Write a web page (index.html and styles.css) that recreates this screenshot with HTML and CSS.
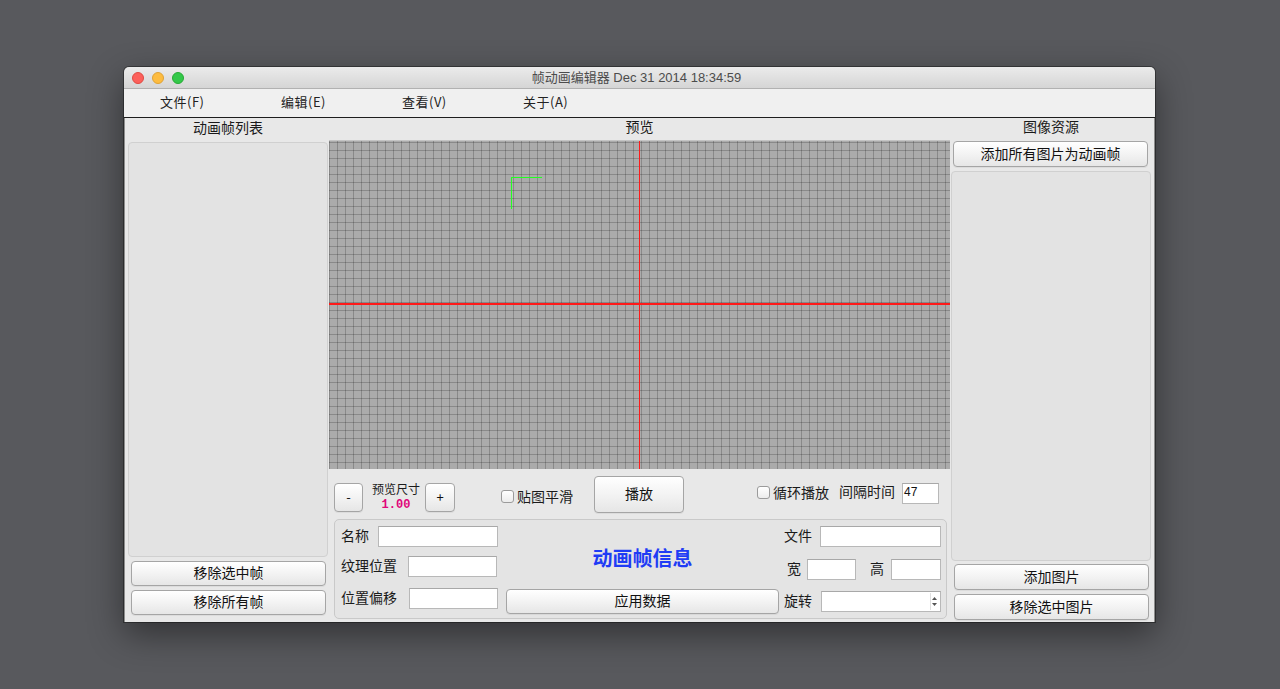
FILE: index.html
```html
<!DOCTYPE html>
<html lang="zh-CN">
<head>
<meta charset="utf-8">
<title>帧动画编辑器</title>
<link rel="stylesheet" href="styles.css">
</head>
<body>
<div class="window">
  <div class="titlebar">
    <div class="lights">
      <span class="light light-red"></span>
      <span class="light light-yellow"></span>
      <span class="light light-green"></span>
    </div>
    <div class="title">帧动画编辑器 Dec 31 2014 18:34:59</div>
    <div></div>
  </div>
  <div class="menubar">
    <span class="menu-item">文件(F)</span>
    <span class="menu-item">编辑(E)</span>
    <span class="menu-item">查看(V)</span>
    <span class="menu-item">关于(A)</span>
  </div>
  <div class="content">
    <section class="side side-left">
      <div class="panel-title title-left">动画帧列表</div>
      <div class="listbox"></div>
      <button class="btn btn-side btn-left-1">移除选中帧</button>
      <button class="btn btn-side btn-left-2">移除所有帧</button>
    </section>

    <section class="center">
      <div class="panel-title title-center">预览</div>
      <div class="preview">
        <div class="axis axis-v"></div>
        <div class="axis axis-h"></div>
        <div class="marker"></div>
      </div>
      <div class="controls">
        <button class="btn btn-zoom btn-minus">-</button>
        <div class="size-block">
          <div class="size-label">预览尺寸</div>
          <div class="size-value">1.00</div>
        </div>
        <button class="btn btn-zoom btn-plus">+</button>
        <label class="check check-smooth"><span class="box"></span><span>贴图平滑</span></label>
        <button class="btn btn-play">播放</button>
        <label class="check check-loop"><span class="box"></span><span>循环播放</span></label>
        <span class="interval-label">间隔时间</span>
        <div class="field field-interval">47</div>
      </div>
      <div class="infobox">
        <div class="info-col info-left">
          <div class="row">
            <span class="lbl lbl-name">名称</span>
            <div class="field w-120"></div>
          </div>
          <div class="row row-gap9">
            <span class="lbl lbl-tex">纹理位置</span>
            <div class="field w-89"></div>
          </div>
          <div class="row row-gap11">
            <span class="lbl lbl-off">位置偏移</span>
            <div class="field w-89"></div>
          </div>
        </div>
        <div class="info-col info-mid">
          <div class="info-title">动画帧信息</div>
          <button class="btn btn-apply">应用数据</button>
        </div>
        <div class="info-col info-right">
          <div class="row">
            <span class="lbl lbl-file">文件</span>
            <div class="field w-121"></div>
          </div>
          <div class="row row-gap12">
            <span class="lbl lbl-w">宽</span>
            <div class="field w-49"></div>
            <span class="lbl lbl-h">高</span>
            <div class="field w-50"></div>
          </div>
          <div class="row row-gap11">
            <span class="lbl lbl-rot">旋转</span>
            <div class="field spin">
              <span class="spin-arrows">
                <svg width="7" height="15" viewBox="0 0 7 15"><path d="M3.5 3 L6 6 L1 6 Z" fill="#555"/><path d="M3.5 12 L6 9 L1 9 Z" fill="#555"/></svg>
              </span>
            </div>
          </div>
        </div>
      </div>
    </section>

    <section class="side side-right">
      <div class="panel-title title-right">图像资源</div>
      <button class="btn btn-side btn-right-top">添加所有图片为动画帧</button>
      <div class="listbox listbox-right"></div>
      <button class="btn btn-side btn-right-1">添加图片</button>
      <button class="btn btn-side btn-right-2">移除选中图片</button>
    </section>
  </div>
</div>
</body>
</html>
```

FILE: styles.css
```css
* { box-sizing: border-box; }

html, body {
  margin: 0;
  padding: 0;
}

body {
  width: 1280px;
  height: 689px;
  overflow: hidden;
  background: #58595d;
  font-family: "Noto Sans CJK SC", "Liberation Sans", sans-serif;
  color: #1a1a1a;
  padding: 67px 0 0 124px;
}

.window {
  width: 1031px;
  height: 555px;
  display: flex;
  flex-direction: column;
  border-radius: 5px 5px 0 0;
  box-shadow: 0 12px 35px rgba(0, 0, 0, 0.45), 0 0 0 1px rgba(0, 0, 0, 0.35);
  overflow: hidden;
}

/* title bar */
.titlebar {
  height: 22px;
  flex: none;
  display: grid;
  grid-template-columns: 1fr auto 1fr;
  align-items: center;
  background: linear-gradient(#ebebeb, #d5d5d5);
  border-bottom: 1px solid #b1b1b1;
}

.lights {
  display: flex;
  gap: 8px;
  padding-left: 8px;
}

.light {
  width: 12px;
  height: 12px;
  border-radius: 50%;
}
.light-red { background: #fc605b; border: 1px solid #de4a42; }
.light-yellow { background: #fdbc40; border: 1px solid #dea236; }
.light-green { background: #34c84a; border: 1px solid #27aa35; }

.title {
  font-family: "Liberation Sans", "Noto Sans CJK SC", sans-serif;
  font-size: 13px;
  color: #4c4c4c;
  line-height: 16px;
  margin-right: 6px;
}

/* menu */
.menubar {
  height: 29px;
  flex: none;
  display: flex;
  align-items: center;
  padding-left: 36px;
  padding-bottom: 3px;
  background: #f0f0f0;
  border-bottom: 1px solid #1e1e1e;
}

.menu-item {
  width: 121px;
  font-size: 13px;
  line-height: 16px;
  color: #222;
  letter-spacing: 0.5px;
}

/* content */
.content {
  flex: 1;
  display: flex;
  background: #e8e8e8;
  border-left: 1px solid #8d8d8d;
  border-right: 1px solid #8d8d8d;
  padding: 0 3px 0 3px;
}

.side {
  width: 200px;
  display: flex;
  flex-direction: column;
}

.side-left { margin-right: 1px; }
.side-right { margin-left: 1px; }

.panel-title {
  font-size: 14px;
  text-align: center;
  color: #1a1a1a;
  flex: none;
}
.title-left { height: 24px; line-height: 18px; }
.title-center { height: 22px; line-height: 17px; }
.title-right { height: 23px; line-height: 17px; }

.listbox {
  flex: 1;
  background: #e3e3e3;
  border: 1px solid #d0d0d0;
  border-radius: 4px;
}

.listbox-right {
  margin-top: 4px;
}

/* buttons */
.btn {
  font-family: "Noto Sans CJK SC", "Liberation Sans", sans-serif;
  font-size: 14px;
  color: #111;
  background: linear-gradient(#ffffff, #f3f3f3 50%, #e6e6e6);
  border: 1px solid #a5a5a5;
  border-radius: 4px;
  padding: 0 0 3px 0;
  line-height: 16px;
  box-shadow: 0 1px 0 rgba(0, 0, 0, 0.05);
}

.btn-side {
  height: 25px;
  flex: none;
}
.btn-left-1 { margin: 4px 2px 0 3px; }
.btn-left-2 { margin: 4px 2px 7px 3px; }
.btn-right-top { height: 26px; margin: 0 3px 0 2px; }
.btn-right-1 { height: 26px; margin: 3px 2px 0 3px; }
.btn-right-2 { height: 26px; margin: 4px 2px 2px 3px; }

/* center */
.center {
  width: 621px;
  display: flex;
  flex-direction: column;
}

.preview {
  position: relative;
  height: 329px;
  flex: none;
  background-color: #ababab;
  background-image:
    linear-gradient(to right, rgba(0, 0, 0, 0.2) 1px, transparent 1px),
    linear-gradient(to bottom, rgba(0, 0, 0, 0.2) 1px, transparent 1px);
  background-size: 8px 8px;
  background-position: 0 1px;
  border-top: 1px solid #c4c4c4;
}

.axis {
  position: absolute;
  background: #ff1a1a;
}
.axis-v { left: 310px; top: 0; bottom: 0; width: 1px; }
.axis-h { top: 162px; left: 0; right: 0; height: 2px; }

.marker {
  position: absolute;
  left: 182px;
  top: 36px;
  width: 31px;
  height: 32px;
  border-top: 1px solid #22ff22;
  border-left: 1px solid #22ff22;
}

/* controls */
.controls {
  height: 50px;
  flex: none;
  display: flex;
  align-items: flex-start;
}

.btn-zoom {
  margin-top: 14px;
  height: 29px;
  font-size: 13px;
  padding-bottom: 2px;
}
.btn-minus { width: 29px; margin-left: 5px; }
.btn-plus { width: 30px; margin-left: 5px; }

.size-block {
  width: 48px;
  margin-left: 9px;
  margin-top: 13px;
  text-align: center;
}
.size-label {
  font-size: 12px;
  line-height: 13px;
}
.size-value {
  margin-top: 3px;
  font-family: "Liberation Mono", monospace;
  font-size: 12px;
  line-height: 14px;
  font-weight: bold;
  color: #e0067a;
}

.check {
  display: flex;
  align-items: center;
  height: 14px;
  font-size: 14px;
  line-height: 14px;
  gap: 3px;
}
.box {
  width: 13px;
  height: 13px;
  border: 1px solid #9b9b9b;
  border-radius: 3px;
  background: linear-gradient(#ffffff, #ececec);
}
.check-smooth { margin-left: 46px; margin-top: 20px; }
.check-loop { margin-left: 73px; margin-top: 16px; }

.btn-play {
  margin-left: 21px;
  margin-top: 7px;
  width: 90px;
  height: 37px;
}

.interval-label {
  margin-left: 10px;
  margin-top: 15px;
  font-size: 14px;
  line-height: 14px;
}

.field {
  height: 21px;
  background: #fff;
  border: 1px solid #b8b8b8;
  border-top-color: #a8a8a8;
  flex: none;
}
.field-interval {
  margin-left: 7px;
  margin-top: 14px;
  width: 37px;
  font-family: "Liberation Sans", sans-serif;
  font-size: 12px;
  line-height: 14px;
  padding: 1px 0 0 1px;
  color: #111;
}

/* info box */
.infobox {
  margin-left: 5px;
  width: 613px;
  height: 100px;
  flex: none;
  display: flex;
  border: 1px solid #c9c9c9;
  border-radius: 5px;
  background: #e4e4e4;
  padding: 6px 5px 0 6px;
}

.info-col {
  display: flex;
  flex-direction: column;
}
.info-left { width: 157px; }
.info-mid { width: 273px; margin-left: 8px; }
.info-right { width: 157px; margin-left: 5px; }

.row {
  display: flex;
  align-items: center;
  height: 21px;
}
.row-gap9 { margin-top: 9px; }
.row-gap11 { margin-top: 11px; }
.row-gap12 { margin-top: 12px; }

.lbl {
  font-size: 14px;
  line-height: 14px;
  flex: none;
  padding-bottom: 3px;
}
.lbl-name { width: 37px; }
.lbl-tex { width: 67px; }
.lbl-off { width: 68px; }
.lbl-file { width: 36px; }
.lbl-w { width: 23px; padding-left: 3px; }
.lbl-h { width: 21px; margin-left: 14px; }
.lbl-rot { width: 37px; }

.w-120 { width: 120px; }
.w-121 { width: 121px; }
.w-89 { width: 89px; }
.w-49 { width: 49px; }
.w-50 { width: 50px; }

.spin {
  width: 120px;
  display: flex;
  justify-content: flex-end;
  align-items: center;
  padding-right: 2px;
}
.spin-arrows {
  display: flex;
  width: 8px;
  height: 17px;
  align-items: center;
  justify-content: center;
  border-left: 1px solid #e0e0e0;
}

.info-title {
  flex: 1;
  display: flex;
  align-items: center;
  justify-content: center;
  font-size: 20px;
  font-weight: bold;
  color: #1f3cf5;
  line-height: 24px;
  padding-bottom: 0;
}

.btn-apply {
  height: 25px;
  flex: none;
  margin-bottom: 4px;
}
```
